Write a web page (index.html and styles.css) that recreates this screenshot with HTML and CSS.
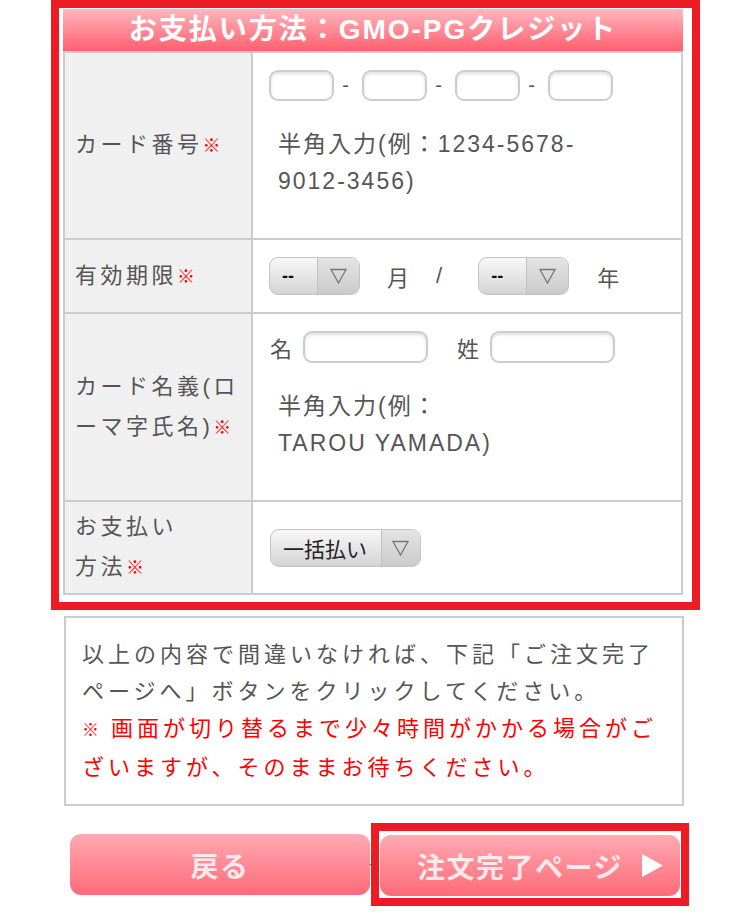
FILE: index.html
```html
<!DOCTYPE html>
<html lang="ja">
<head>
<meta charset="utf-8">
<title>お支払い方法</title>
<link rel="stylesheet" href="styles.css">
</head>
<body>
<div class="frame">
  <h2 class="form-title">お支払い方法：GMO-PGクレジット</h2>
  <table class="form-table">
    <tr>
      <th>カード番号<span class="req">※</span></th>
      <td>
        <div class="card-inputs">
          <input class="field num" type="text">
          <span class="dash">-</span>
          <input class="field num" type="text">
          <span class="dash">-</span>
          <input class="field num" type="text">
          <span class="dash">-</span>
          <input class="field num" type="text">
        </div>
        <p class="hint">半角入力(例：1234-5678-<br>9012-3456)</p>
      </td>
    </tr>
    <tr>
      <th>有効期限<span class="req">※</span></th>
      <td>
        <div class="expiry">
          <div class="select select-short">
            <span class="select-value">--</span>
            <span class="select-arrow"><svg width="17" height="16" viewBox="0 0 17 16"><polygon points="1,1.5 16,1.5 8.5,15" fill="none" stroke="#777" stroke-width="1.3"/></svg></span>
          </div>
          <span class="unit unit-month">月</span>
          <span class="unit unit-slash">/</span>
          <div class="select select-short select-year">
            <span class="select-value">--</span>
            <span class="select-arrow"><svg width="17" height="16" viewBox="0 0 17 16"><polygon points="1,1.5 16,1.5 8.5,15" fill="none" stroke="#777" stroke-width="1.3"/></svg></span>
          </div>
          <span class="unit unit-year">年</span>
        </div>
      </td>
    </tr>
    <tr>
      <th>カード名義(ロ<br>ーマ字氏名)<span class="req">※</span></th>
      <td>
        <div class="name-inputs">
          <span class="name-label">名</span>
          <input class="field name" type="text">
          <span class="name-label name-label-last">姓</span>
          <input class="field name" type="text">
        </div>
        <p class="hint">半角入力(例：<br>TAROU YAMADA)</p>
      </td>
    </tr>
    <tr>
      <th>お支払い<br>方法<span class="req">※</span></th>
      <td>
        <div class="select select-pay">
          <span class="select-value">一括払い</span>
          <span class="select-arrow"><svg width="17" height="16" viewBox="0 0 17 16"><polygon points="1,1.5 16,1.5 8.5,15" fill="none" stroke="#777" stroke-width="1.3"/></svg></span>
        </div>
      </td>
    </tr>
  </table>
</div>

<div class="notice">
  <p>以上の内容で間違いなければ、下記「ご注文完了ページへ」ボタンをクリックしてください。</p>
  <p class="warn"><span class="warn-mark">※</span>&nbsp;画面が切り替るまで少々時間がかかる場合がございますが、そのままお待ちください。</p>
</div>

<div class="actions">
  <a class="btn btn-back" href="#">戻る</a>
  <span class="connector"></span>
  <div class="next-frame">
    <a class="btn btn-next" href="#">注文完了ページ<svg class="arrow" width="21" height="23" viewBox="0 0 21 23"><polygon points="0,0 21,11.5 0,23" fill="#fff"/></svg></a>
  </div>
</div>
</body>
</html>
```
FILE: styles.css
```css
body {
  margin: 0;
  background: #fff;
  color: #555;
  font-family: "Liberation Sans", "Noto Sans CJK JP", sans-serif;
}

.frame {
  margin: 0 50px 0 51px;
  border: 8px solid #ed1c24;
  padding: 1px 9px 7px 4px;
}

.form-title {
  margin: 0;
  height: 42px;
  line-height: 42px;
  background: linear-gradient(#ffb7be, #ff5f6f);
  color: #fff;
  font-size: 28px;
  font-weight: bold;
  letter-spacing: 2px;
  text-align: center;
}

.form-table {
  width: 100%;
  border-spacing: 0;
  border: 2px solid #ccc;
  border-top: 0;
}

.form-table th,
.form-table td {
  border-top: 2px solid #ccc;
  vertical-align: middle;
}

.form-table th {
  box-sizing: border-box;
  width: 188px;
  padding: 5px 6px 5px 10px;
  border-right: 2px solid #ccc;
  background: #f0f0f0;
  font-weight: normal;
  font-size: 22px;
  line-height: 40px;
  letter-spacing: 3.5px;
  text-align: left;
  color: #555;
}

.form-table td {
  padding: 17px 16px;
  background: #fff;
}

.req {
  color: #f00;
  font-weight: bold;
  font-size: 18px;
  letter-spacing: 0;
}

.field {
  box-sizing: border-box;
  margin: 0;
  border: 2px solid #cdcdcd;
  border-radius: 9px;
  background: #fff;
  box-shadow: inset 0 2px 3px rgba(0, 0, 0, 0.12);
}

.card-inputs {
  display: flex;
  align-items: center;
}

.num {
  width: 65px;
  height: 31px;
}

.dash {
  width: 28px;
  padding-right: 5px;
  box-sizing: border-box;
  text-align: center;
  font-size: 20px;
  line-height: 31px;
}

.hint {
  margin: 25px 0 21px;
  padding-left: 9px;
  font-size: 23px;
  line-height: 37px;
  letter-spacing: 2px;
}

.expiry {
  display: flex;
  align-items: center;
}

.select {
  box-sizing: border-box;
  display: flex;
  height: 38px;
  border: 1px solid #c4c4c4;
  border-radius: 9px;
  background: linear-gradient(#f8f8f8, #d4d4d4);
  overflow: hidden;
}

.select-value {
  display: flex;
  align-items: center;
  color: #111;
}

.select-short .select-value {
  width: 47px;
  padding-left: 12px;
  box-sizing: border-box;
  font-size: 18px;
  font-weight: bold;
}

.select-arrow {
  display: flex;
  align-items: center;
  justify-content: center;
  width: 41px;
  border-left: 1px solid #c2c2c2;
  background: linear-gradient(#e4e4e4, #cbcbcb);
}

.unit {
  font-size: 22px;
}

.unit-month {
  margin-left: 27px;
}

.unit-slash {
  margin-left: 27px;
}

.select-year {
  margin-left: 36px;
}

.unit-year {
  margin-left: 28px;
}

.name-inputs {
  display: flex;
  align-items: center;
}

.name-label {
  font-size: 22px;
  margin-left: 1px;
}

.name-label-last {
  margin-left: 29px;
}

.name {
  width: 125px;
  height: 32px;
  margin-left: 11px;
}

.select-pay {
  width: 151px;
  margin-left: 1px;
}

.select-pay .select-value {
  width: 111px;
  padding-left: 12px;
  box-sizing: border-box;
  font-size: 21px;
  color: #222;
}

.select-pay .select-arrow {
  width: 39px;
}

.notice {
  margin: 6px 66px 0 64px;
  border: 2px solid #ccc;
  padding: 18px 16px;
  font-size: 22px;
  line-height: 37px;
  letter-spacing: 4px;
}

.notice p {
  margin: 0;
}

.warn {
  color: #f00;
}

.warn-mark {
  font-size: 17px;
  font-weight: bold;
  letter-spacing: 2px;
}

.actions {
  display: flex;
  align-items: center;
  margin-top: 17px;
  padding-left: 70px;
}

.btn {
  box-sizing: border-box;
  display: flex;
  align-items: center;
  justify-content: center;
  width: 300px;
  height: 61px;
  border-radius: 11px;
  background: linear-gradient(#ffaab2, #ff6a79);
  color: rgba(255, 255, 255, 0.82);
  font-size: 28px;
  font-weight: bold;
  letter-spacing: 1.5px;
  text-decoration: none;
}

.connector {
  width: 1px;
  height: 1px;
  background: #4a4f8a;
}

.next-frame {
  border: 8px solid #ed1c24;
  padding: 4px 1px 2px 1px;
  background: #fff;
}

.btn-next {
  padding-left: 20px;
}

.arrow {
  margin-left: 19px;
}
```
